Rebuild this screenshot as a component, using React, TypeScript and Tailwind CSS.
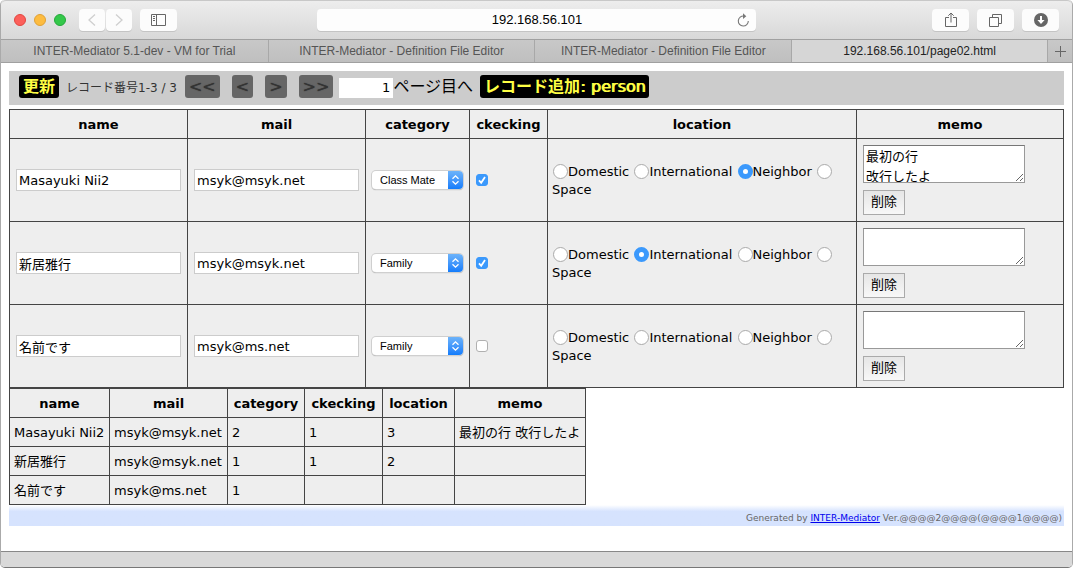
import { Fragment } from "react";
import type { ReactNode } from "react";

type Person = {
  name: string;
  mail: string;
  category: string;
  checking: boolean;
  location: string;
  memo: string;
};

const people: Person[] = [
  { name: "Masayuki Nii2", mail: "msyk@msyk.net", category: "Class Mate", checking: true, location: "Neighbor", memo: "最初の行\n改行したよ" },
  { name: "新居雅行", mail: "msyk@msyk.net", category: "Family", checking: true, location: "International", memo: "" },
  { name: "名前です", mail: "msyk@ms.net", category: "Family", checking: false, location: "", memo: "" },
];

const rawRows = [
  ["Masayuki Nii2", "msyk@msyk.net", "2", "1", "3", "最初の行 改行したよ"],
  ["新居雅行", "msyk@msyk.net", "1", "1", "2", ""],
  ["名前です", "msyk@ms.net", "1", "", "", ""],
];

const columns = ["name", "mail", "category", "ckecking", "location", "memo"];
const locations = ["Domestic", "International", "Neighbor", "Space"];
const categories = ["Family", "Class Mate"];

const tabs = [
  { title: "INTER-Mediator 5.1-dev - VM for Trial", width: "flex-[268]" },
  { title: "INTER-Mediator - Definition File Editor", width: "flex-[267]" },
  { title: "INTER-Mediator - Definition File Editor", width: "flex-[257]" },
];

function ToolButton({ label, narrow, children }: { label: string; narrow?: boolean; children: ReactNode }) {
  return (
    <button
      type="button"
      aria-label={label}
      className={
        "flex h-[22px] items-center justify-center rounded-[4px] bg-[#fcfcfc] shadow-[0_1px_0_#c4c4c4] " +
        (narrow ? "w-[26px]" : "w-[37px]")
      }
    >
      {children}
    </button>
  );
}

function Toolbar() {
  return (
    <header className="grid h-[39px] grid-cols-[1fr_minmax(0,439px)_1fr] items-center rounded-t-[5px] border-t border-[#c8c8c8] bg-linear-to-b from-[#ededed] to-[#d8d8d8] px-[13px]">
      <div className="flex items-center">
        <div className="flex gap-2">
          <button type="button" aria-label="Close" className="size-3 rounded-full border border-[#e2463f] bg-[#fc605b]" />
          <button type="button" aria-label="Minimize" className="size-3 rounded-full border border-[#e0a135] bg-[#fdbc40]" />
          <button type="button" aria-label="Zoom" className="size-3 rounded-full border border-[#24a83a] bg-[#34c84a]" />
        </div>
        <div className="ml-[13px] flex gap-px">
          <ToolButton label="Back" narrow>
            <svg width="8" height="12" viewBox="0 0 8 12" fill="none" stroke="#cfcfcf" strokeWidth="1.3">
              <path d="M7 .5 1 6l6 5.500" />
            </svg>
          </ToolButton>
          <ToolButton label="Forward" narrow>
            <svg width="8" height="12" viewBox="0 0 8 12" fill="none" stroke="#cfcfcf" strokeWidth="1.3">
              <path d="M1 .5 7 6l-6 5.500" />
            </svg>
          </ToolButton>
        </div>
        <div className="ml-2">
          <ToolButton label="Sidebar">
            <svg width="15" height="12" viewBox="0 0 15 12" fill="none" stroke="#666">
              <path d="M.5 .5h14v11H.5zM5.500 .5v11M2 2.500h2M2 4.500h2M2 6.500h2" />
            </svg>
          </ToolButton>
        </div>
      </div>
      <div className="grid h-[22px] grid-cols-[20px_1fr_20px] items-center rounded-[4px] bg-[#fdfdfd] pr-[3px] pl-1 shadow-[0_1px_0_#c4c4c4]">
        <input
          aria-label="Address"
          defaultValue="192.168.56.101"
          className="col-start-2 w-full min-w-0 bg-transparent text-center font-['Liberation_Sans',sans-serif] text-[13px] leading-5 text-black outline-none"
        />
        <button type="button" aria-label="Reload" className="flex justify-center">
          <svg width="13" height="14" viewBox="0 0 13 14" fill="none" stroke="#777" strokeWidth="1.100">
            <path d="M7 3.100A5 5 0 1 0 11.300 8" />
            <path d="M6 .3 9.300 3.200 6 6z" fill="#777" stroke="none" />
          </svg>
        </button>
      </div>
      <div className="flex justify-end gap-2">
        <ToolButton label="Share">
          <svg width="12" height="16" viewBox="0 0 12 16" fill="none" stroke="#666">
            <path d="M4 5.500H.5v9h11v-9H8M6 10.500V1M3.300 3.700 6 1l2.700 2.700" />
          </svg>
        </ToolButton>
        <ToolButton label="Show all tabs">
          <svg width="13" height="13" viewBox="0 0 13 13" fill="none" stroke="#666">
            <path d="M.5 3.500h9v9h-9zM3.500 3V.5h9v9H10" />
          </svg>
        </ToolButton>
        <ToolButton label="Downloads">
          <svg width="14" height="14" viewBox="0 0 14 14">
            <circle cx="7" cy="7" r="7" fill="#666" />
            <path d="M6 3h2v4h2.600L7 11 3.400 7H6z" fill="#fff" />
          </svg>
        </ToolButton>
      </div>
    </header>
  );
}

function TabBar() {
  return (
    <nav className="flex h-6 border-y border-[#a0a0a0] bg-linear-to-b from-[#c8c8c8] to-[#bfbfbf] text-center font-['Liberation_Sans',sans-serif] text-xs leading-[22px] text-[#555]">
      {tabs.map((tab, i) => (
        <a key={i} href="#" className={tab.width + " min-w-0 basis-0 truncate border-r border-[#a8a8a8]"}>
          {tab.title}
        </a>
      ))}
      <a href="#" aria-current="page" className="min-w-0 flex-[256] basis-0 truncate border-r border-[#a8a8a8] bg-[#d6d6d6] text-[#222]">
        192.168.56.101/page02.html
      </a>
      <button type="button" aria-label="New tab" className="flex w-6 items-center justify-center">
        <svg width="11" height="11" viewBox="0 0 11 11" stroke="#666">
          <path d="M5.500 0v11M0 5.500h11" />
        </svg>
      </button>
    </nav>
  );
}

function Navigator() {
  const dark = "h-[23px] rounded-[3px] bg-black px-1 text-base leading-[23px] font-bold text-[#ffff44]";
  const gray =
    "h-[23px] rounded-[3px] bg-[#666] px-1 text-base leading-[23px] text-[#333] [text-shadow:0_0_1px_#333]";
  return (
    <div className="flex h-[34px] items-start bg-[#ccc] px-[10px] pt-1 whitespace-nowrap">
      <button type="button" className={dark}>更新</button>
      <span className="mr-2 ml-[7px] text-xs leading-[26px] text-[#333]">レコード番号1-3 / 3</span>
      <div className="flex gap-3">
        <button type="button" className={gray}>&lt;&lt;</button>
        <button type="button" className={gray}>&lt;</button>
        <button type="button" className={gray}>&gt;</button>
        <button type="button" className={gray}>&gt;&gt;</button>
      </div>
      <div className="mr-[7px] ml-1.5 flex">
        <input id="page" defaultValue="1" className="mt-[3px] h-5 w-[54px] bg-white px-[3px] text-right text-[13px] outline-none" />
        <label htmlFor="page" className="text-base leading-[23px]">ページ目へ</label>
      </div>
      <button type="button" className={dark}>
        レコード追加<span className="font-normal [text-shadow:1px_0_#ffff44]">: person</span>
      </button>
    </div>
  );
}

function CategorySelect({ value }: { value: string }) {
  return (
    <div className="grid h-[18px] w-[91px] grid-cols-[1fr_15px] overflow-hidden rounded-[4px] bg-white shadow-[0_0_0_1px_#cfcfcf,0_1px_1px_#999]">
      <select
        aria-label="category"
        defaultValue={value}
        className="col-span-2 col-start-1 row-start-1 h-[18px] appearance-none bg-transparent pl-2 font-['Liberation_Sans',sans-serif] text-[11px] leading-[18px] outline-none"
      >
        {categories.map((c) => (
          <option key={c}>{c}</option>
        ))}
      </select>
      <span className="pointer-events-none col-start-2 row-start-1 flex items-center justify-center bg-linear-to-b from-[#6cb3fa] to-[#107cfb]">
        <svg width="7" height="10" viewBox="0 0 7 10" fill="none" stroke="#fff" strokeWidth="1.300">
          <path d="M.5 3.800 3.500 .9l3 2.900M.5 6.200l3 2.900 3-2.900" />
        </svg>
      </span>
    </div>
  );
}

function CheckBox({ checked }: { checked: boolean }) {
  return (
    <span className="grid size-3">
      <input
        type="checkbox"
        aria-label="ckecking"
        defaultChecked={checked}
        className="peer col-start-1 row-start-1 size-3 appearance-none rounded-[3px] border border-[#b0b0b0] bg-white checked:border-[#3b99fc] checked:bg-[#3b99fc]"
      />
      <svg viewBox="0 0 12 12" fill="none" stroke="#fff" strokeWidth="1.800" className="pointer-events-none invisible col-start-1 row-start-1 size-3 peer-checked:visible">
        <path d="M3 6.300 5.200 8.800 9 3" />
      </svg>
    </span>
  );
}

function EditTable() {
  return (
    <table className="mt-1 w-full table-fixed border-collapse bg-[#eee]">
      <colgroup>
        <col className="w-[178px]" />
        <col className="w-[178px]" />
        <col className="w-[104px]" />
        <col className="w-[78px]" />
        <col />
        <col className="w-[207px]" />
      </colgroup>
      <thead>
        <tr className="h-[29px]">
          {columns.map((c) => (
            <th key={c} className="border border-[#444] px-0 pt-0.5 pb-0">{c}</th>
          ))}
        </tr>
      </thead>
      <tbody>
        {people.map((p, i) => (
          <tr key={i} className="h-[83px]">
            <td className="border border-[#444] px-1.5 py-0">
              <input aria-label="name" defaultValue={p.name} className="block h-[22px] w-full border border-[#ccc] bg-white px-0.5 outline-none" />
            </td>
            <td className="border border-[#444] px-1.5 py-0">
              <input aria-label="mail" defaultValue={p.mail} className="block h-[22px] w-full border border-[#ccc] bg-white px-0.5 outline-none" />
            </td>
            <td className="border border-[#444] px-1.5 py-0">
              <CategorySelect value={p.category} />
            </td>
            <td className="border border-[#444] px-1.5 py-0">
              <CheckBox checked={p.checking} />
            </td>
            <td className="border border-[#444] px-1 pt-0.5 pb-0 leading-[18px]">
              {locations.map((l) => (
                <Fragment key={l}>
                  <label>
                    <input
                      type="radio"
                      name={"location" + i}
                      defaultChecked={p.location === l}
                      className="ml-px size-[15px] appearance-none rounded-full border border-[#aaa] bg-white align-[-3px] checked:border-[5px] checked:border-[#3b99fc]"
                    />
                    {l}
                  </label>{" "}
                </Fragment>
              ))}
            </td>
            <td className="border border-[#444] px-1.5 py-0">
              <textarea
                aria-label="memo"
                defaultValue={p.memo}
                className="block h-[38px] w-[162px] resize overflow-hidden border border-[#999] border-t-[#777] bg-white px-0.5 py-px leading-5 outline-none"
              />
              <button type="button" className="mt-[7px] block h-[25px] w-[42px] border border-[#aaa] bg-linear-to-b from-[#e6e6e6] to-[#f8f8f8] pb-0.5 leading-5">
                削除
              </button>
            </td>
          </tr>
        ))}
      </tbody>
    </table>
  );
}

function RawTable() {
  return (
    <table className="w-[577px] table-fixed border-collapse bg-[#eee]">
      <colgroup>
        <col className="w-[100px]" />
        <col className="w-[118px]" />
        <col className="w-[77px]" />
        <col className="w-[78px]" />
        <col className="w-[72px]" />
        <col className="w-[131px]" />
      </colgroup>
      <thead>
        <tr className="h-[29px]">
          {columns.map((c) => (
            <th key={c} className="border border-[#444] px-0 pt-0.5 pb-0">{c}</th>
          ))}
        </tr>
      </thead>
      <tbody>
        {rawRows.map((row, i) => (
          <tr key={i} className="h-[29px]">
            {row.map((cell, j) => (
              <td key={j} className="border border-[#444] px-1 pt-0.5 pb-0 whitespace-nowrap">{cell}</td>
            ))}
          </tr>
        ))}
      </tbody>
    </table>
  );
}

export default function App() {
  return (
    <div className="flex min-h-screen flex-col rounded-[5px] border-x border-b border-x-[#aaa] border-b-[#777] bg-white font-['DejaVu_Sans','Noto_Sans_CJK_JP',sans-serif] text-[13px] leading-5 text-black">
      <Toolbar />
      <TabBar />
      <main className="flex-1 px-2 pt-2">
        <Navigator />
        <EditTable />
        <RawTable />
        <footer className="h-[21px] bg-linear-to-b from-white to-[#d6e3fe] to-30% pt-1 pr-0.5 text-right text-[9px] leading-[19px] text-[#666]">
          Generated by <a href="#" className="text-[#0000ee] underline">INTER-Mediator</a> Ver.@@@@2@@@@(@@@@1@@@@)
        </footer>
      </main>
      <div className="h-4 rounded-b-[4px] border-t border-[#888] bg-[#d9d9d9]" />
    </div>
  );
}
